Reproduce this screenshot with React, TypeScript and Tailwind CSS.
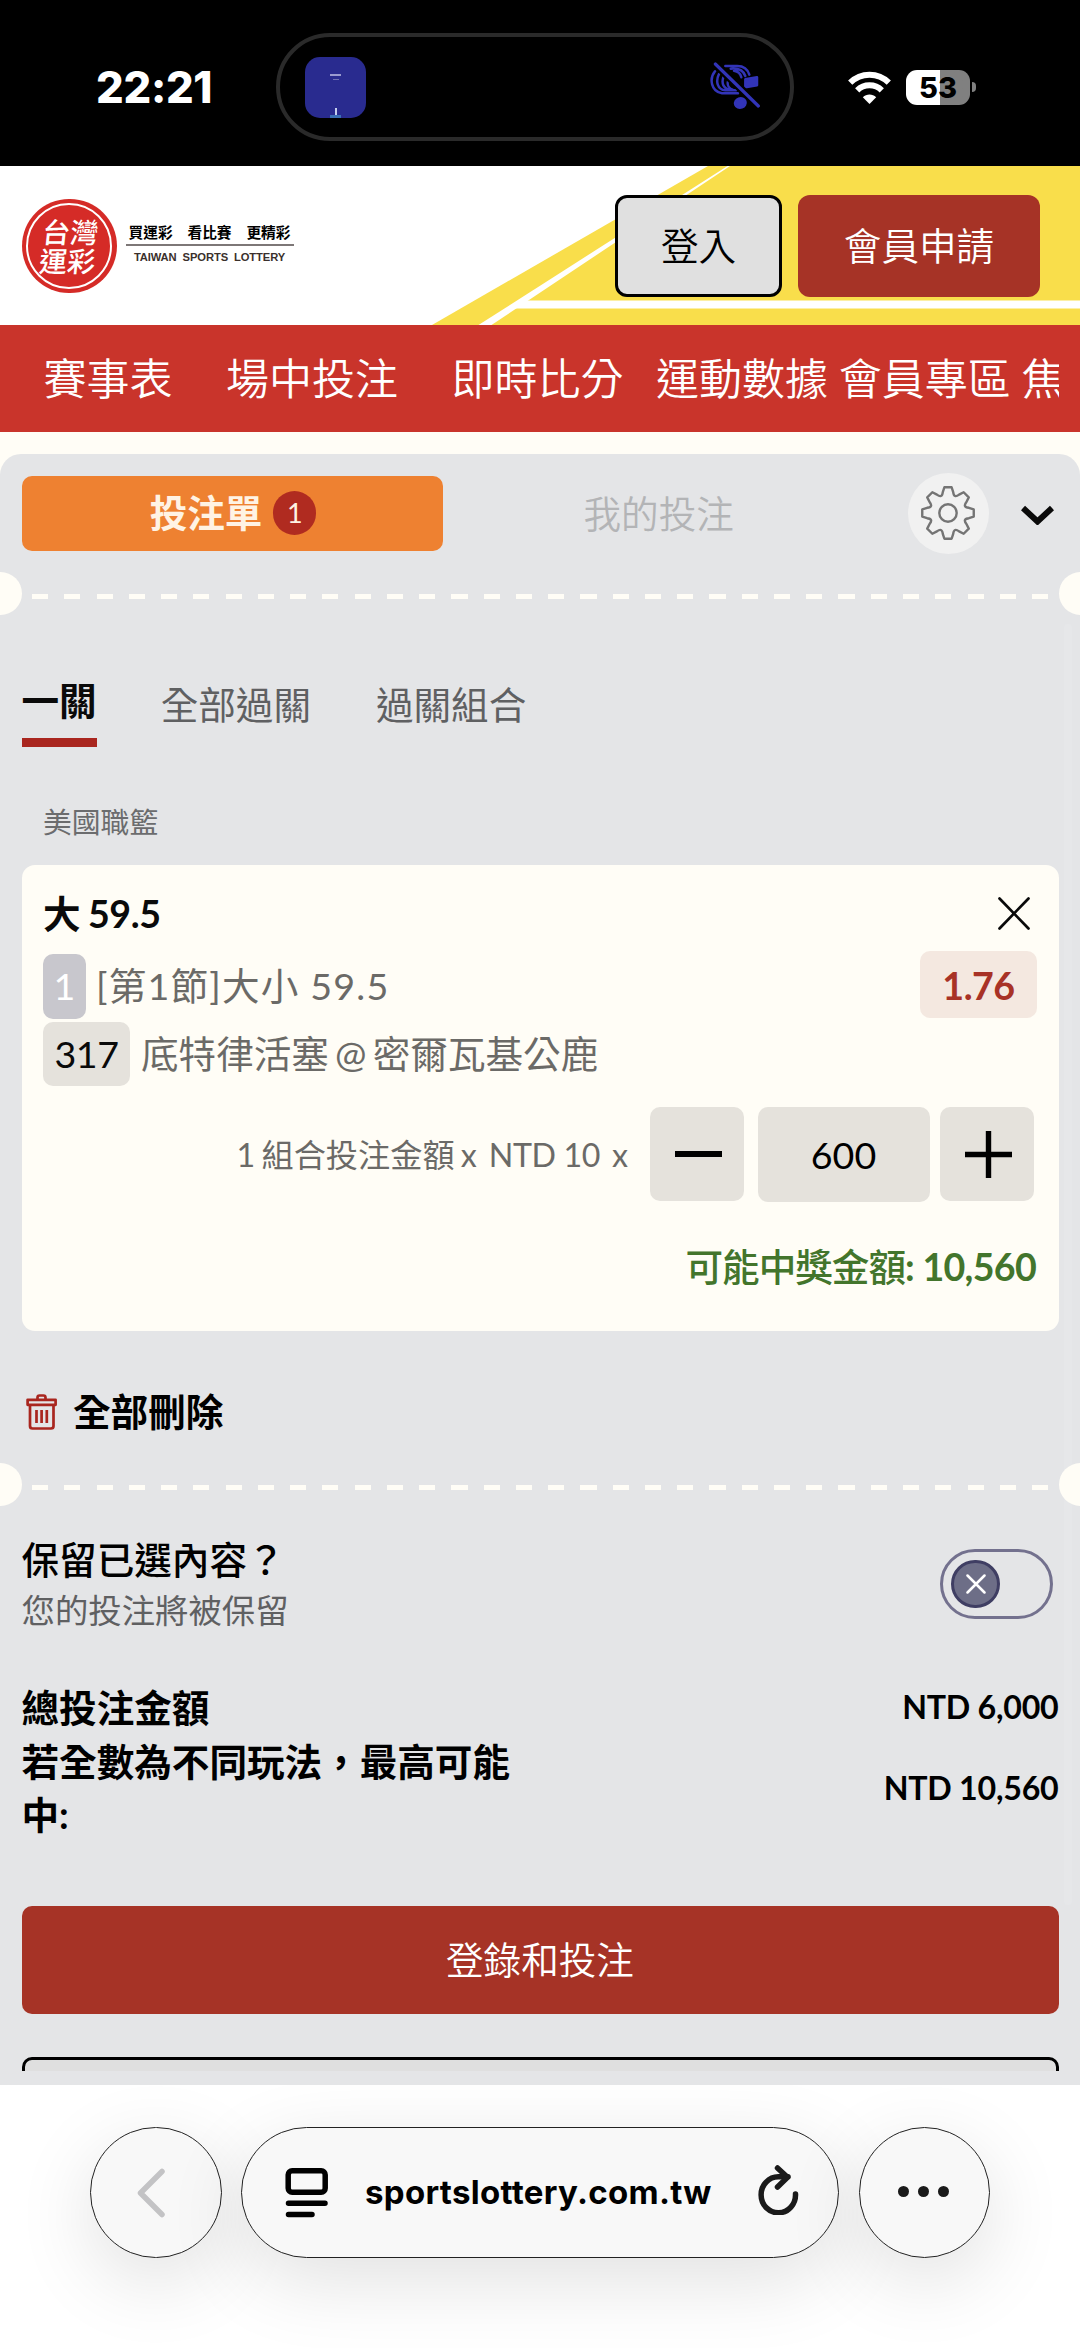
const NAV = [
  { label: '賽事表', gap: 'mr-[53.5px]' },
  { label: '場中投注', gap: 'mr-[53.5px]' },
  { label: '即時比分', gap: 'mr-[32.5px]' },
  { label: '運動數據', gap: 'mr-[10.7px]' },
  { label: '會員專區', gap: 'mr-[10.7px]' },
  { label: '焦', gap: '' },
];

function StatusBar() {
  return (
    <div className="relative flex h-[166px] items-center bg-black text-white">
      <div className="mt-[8px] ml-[96px] w-[120px] font-['Inter'] text-[43.500px] leading-[50px] font-extrabold whitespace-nowrap tracking-[-0.300px]">22:21</div>
      <div className="mt-[8px] ml-[60px] flex h-[108px] w-[518px] items-center justify-between rounded-full border-4 border-[#2a2a2a] pr-[30px] pl-[25px]">
        <div className="flex h-[61px] w-[61px] flex-col items-center rounded-[15px] bg-[#292b8f]">
          <div className="mt-[17px] h-[2px] w-[11px] bg-[#9a9bd0]" />
          <div className="mt-[3px] h-[1px] w-[6px] bg-[#6f70b5]" />
          <div className="mt-[28px] h-[7px] w-[2px] bg-[#c5d0ee]" />
          <div className="h-[3px] w-[11px] bg-[#3a6fb5]" />
        </div>
        <svg width="50" height="50" viewBox="30 38 150 150" fill="none" stroke="#3234b8" strokeWidth="7.500" strokeLinecap="round">
          <path d="M45 66C27 88 33 126 66 132H114M57 74C46 96 52 120 76 123H108M70 84C64 102 70 118 90 121M84 96C81 106 86 117 98 121" />
          <path d="M76 50H112C132 50 143 60 148 76M92 58C116 56 130 62 136 80M102 64C116 66 122 74 124 84" />
          <path d="M136 90L171 84V108L136 114Z" fill="#3234b8" strokeLinejoin="round" />
          <ellipse cx="121" cy="161" rx="16" ry="14" fill="#3234b8" transform="rotate(-20 121 161)" />
          <path d="M46 44L175 170" stroke="#000" strokeWidth="24" />
          <path d="M46 44L175 170" strokeWidth="9.500" />
        </svg>
      </div>
      <svg className="mt-[9px] ml-[54px]" width="43" height="33" viewBox="0 0 43 33" fill="none" stroke="#fff" strokeWidth="6">
        <path d="M2.2 11.6C13 1 30 1 40.800 11.600" />
        <path d="M9.200 19.300C16 12.600 27 12.600 33.800 19.300" />
        <path d="M21.500 33L14.800 26.200C18.600 22.700 24.400 22.700 28.200 26.200Z" fill="#fff" stroke="none" />
      </svg>
      <div className="mt-[8px] ml-[15px] flex items-center">
        <div className="flex h-[35px] w-[64px] items-center justify-center rounded-[11px] bg-linear-to-r from-white from-53% to-[#808080] to-53% font-['Inter'] text-[29px] leading-[35px] font-extrabold text-black">53</div>
        <div className="ml-[2px] h-[10px] w-[4px] rounded-r-full bg-[#808080]" />
      </div>
    </div>
  );
}

function Header() {
  return (
    <div className="relative flex h-[159px] items-center overflow-hidden bg-white">
      <svg className="absolute inset-0" width="1080" height="159" viewBox="0 0 1080 159">
        <path d="M432 159L708 0H727.500L478.500 159Z" fill="#f9de4b" />
        <path d="M491.500 159L730 0H1080V159Z" fill="#f9de4b" />
        <path d="M526 134.500H1080V142.500H513Z" fill="#fff" />
      </svg>
      <div className="relative ml-[21.500px] flex h-[94px] w-[95px] items-center justify-center rounded-full bg-[#d52b27]">
        <div className="flex h-[86px] w-[86px] items-center justify-center rounded-full border-2 border-white">
          <div className="-skew-x-6 pl-[1px] text-center font-['Noto_Sans_CJK_TC'] text-[28px] leading-[28.5px] font-medium text-white">
            台灣
            <br />
            運彩
          </div>
        </div>
      </div>
      <div className="relative mt-[1px] ml-[9px] w-[168px] text-center">
        <div className="flex h-[31px] items-end justify-between border-b-2 border-[#7d7777] px-[3px] pb-[2px] font-['Noto_Sans_CJK_TC'] text-[14.700px] leading-[20px] font-bold text-black">
          <span>買運彩</span>
          <span>看比賽</span>
          <span>更精彩</span>
        </div>
        <div className="mt-[3px] h-[28px] font-['Liberation_Sans'] text-[11.200px] leading-[16px] font-bold tracking-[-0.100px] whitespace-nowrap text-[#3a302c] [word-spacing:3px]">TAIWAN SPORTS LOTTERY</div>
      </div>
      <div className="relative ml-[321.500px] flex gap-[16px] text-[37.6px] leading-[50px] font-[350]">
        <button className="h-[102px] w-[167px] rounded-[12px] border-[3px] border-black bg-[#e0e0e0] text-black">登入</button>
        <button className="h-[102px] w-[242px] rounded-[12px] bg-[#a63326] text-white">會員申請</button>
      </div>
    </div>
  );
}

function Divider() {
  return (
    <div className="relative z-10 flex h-[43px] items-center overflow-hidden">
      <div className="-ml-[21.500px] h-[43px] w-[43px] shrink-0 rounded-full bg-[#fffdf6]" />
      <div className="mx-[10.700px] mt-[5px] h-[5px] flex-1 bg-[repeating-linear-gradient(90deg,#fffdf6_0_16.130px,transparent_16.130px_32.260px)]" />
      <div className="-mr-[21.500px] h-[43px] w-[43px] shrink-0 rounded-full bg-[#fffdf6]" />
    </div>
  );
}

// Outline of an eight-toothed gear centred in a 54px box.
function gearPath() {
  const at = (deg: number, r: number) => {
    const a = (deg * Math.PI) / 180;
    return `${(27 + r * Math.cos(a)).toFixed(2)} ${(27 + r * Math.sin(a)).toFixed(2)}`;
  };
  let d = '';
  for (let i = 0; i < 8; i++) {
    const c = i * 45 - 90;
    d += `${i === 0 ? 'M' : 'L'}${at(c - 8, 26)}L${at(c + 8, 26)}L${at(c + 14, 21.5)}`;
    d += `C${at(c + 19, 17.5)} ${at(c + 26, 17.5)} ${at(c + 31, 21.5)}`;
  }
  return d + 'Z';
}

function SlipTabs() {
  return (
    <div className="flex h-[118px] items-start pt-[21.500px] pl-[21.500px] text-[37.600px]">
      <div className="flex h-[75px] w-[421px] items-center justify-center rounded-[10px] bg-[#ee8131] pl-[2px] font-bold text-[#fff3e4]">
        <span className="leading-[50px]">投注單</span>
        <span className="ml-[11px] flex h-[44px] w-[43px] items-center justify-center rounded-full bg-[#b02b20] text-[27px] leading-[44px] font-normal">1</span>
      </div>
      <div className="ml-[141px] h-[75px] leading-[75px] font-[350] text-[#b3b4b6]">我的投注</div>
      <div className="-mt-[3px] ml-[174px] flex h-[81px] w-[81px] items-center justify-center rounded-full bg-[#f1f1f1]">
        <svg width="54" height="54" viewBox="0 0 54 54" fill="none" stroke="#747474" strokeWidth="2.400" strokeLinejoin="round">
          <path d={gearPath()} />
          <circle cx="27" cy="27" r="8.700" />
        </svg>
      </div>
      <svg className="mt-[29px] ml-[32.500px]" width="33" height="20" viewBox="0 0 33 20" fill="none" stroke="#0a0a0a" strokeWidth="6">
        <path d="M2 3L16.500 16.500L31 3" />
      </svg>
    </div>
  );
}

function Card() {
  return (
    <div className="mx-[21.500px] h-[466px] rounded-[13px] bg-[#fffdf6] px-[21.500px] pt-[27px] text-[37.600px]">
      <div className="flex h-[43px] items-center justify-between">
        <div className="leading-[43px] font-bold tracking-[-0.400px] whitespace-nowrap text-[#0a0a0a] [word-spacing:-1px]">大 59.5</div>
        <svg className="mr-[7px]" width="32" height="33" viewBox="0 0 32 33" stroke="#0a0a0a" strokeWidth="2.700" strokeLinecap="round">
          <path d="M1.500 1.500L30.500 31.500M30.500 1.500L1.500 31.500" />
        </svg>
      </div>
      <div className="mt-[19px] flex h-[65px] items-center text-[#6b6a67]">
        <span className="flex h-[65px] w-[43px] items-center justify-center rounded-[10px] bg-[#c8c7cd] text-white">1</span>
        <span className="ml-[10px] flex-1 tracking-[1.200px] whitespace-nowrap">[第1節]大小 59.5</span>
        <span className="-mt-[4px] flex h-[67px] w-[117px] items-center justify-center rounded-[10px] bg-[#f4e8e0] pt-[3px] font-bold tracking-[-0.500px] text-[#a83226]">1.76</span>
      </div>
      <div className="mt-[3px] flex h-[64px] items-center text-[#6b6a67]">
        <span className="flex h-[64px] w-[87px] items-center justify-center rounded-[10px] bg-[#e5e2dc] tracking-[-0.500px] text-[#0a0a0a]">317</span>
        <span className="ml-[11px] whitespace-nowrap [word-spacing:-3.400px]">底特律活塞 @ 密爾瓦基公鹿</span>
      </div>
      <div className="mt-[21px] flex h-[95px] items-start justify-end pr-[3px] text-black">
        <span className="mr-[22px] text-[32.200px] leading-[95px] whitespace-nowrap text-[#6b6a67] [word-spacing:-2px]">
          1 組合投注金額 x<span className="ml-[4px] tracking-[-0.400px] [word-spacing:0px]"> NTD 10</span>
          <span className="ml-[12px]">x</span>
        </span>
        <button className="mr-[13.500px] flex h-[94px] w-[94px] items-center justify-center rounded-[10px] bg-[#e5e2dc] pl-[3px]">
          <span className="h-[5.400px] w-[47px] bg-black" />
        </button>
        <div className="mr-[10.500px] h-[95px] w-[172px] rounded-[10px] bg-[#e5e2dc] text-center leading-[95px]">600</div>
        <button className="flex h-[94px] w-[94px] items-center justify-center rounded-[10px] bg-[#e5e2dc] pl-[3px]">
          <svg width="47" height="47" viewBox="0 0 47 47" stroke="#000" strokeWidth="5.400">
            <path d="M0 23.500H47M23.500 0V47" />
          </svg>
        </button>
      </div>
      <div className="mt-[43px] pr-[1px] text-right leading-[43px] font-bold tracking-[-0.700px] whitespace-nowrap text-[#43752c]">
        <span className="font-medium tracking-[-1px]">可能中獎金額</span>: 10,560
      </div>
    </div>
  );
}

function Toolbar() {
  return (
    <div className="flex h-[263px] items-start overflow-hidden bg-white pt-[42px] pl-[90px]">
      <div className="flex h-[131px] w-[132px] items-center justify-center rounded-full border-[1.500px] border-[#222] bg-[#f8f8f8] shadow-[0_22px_80px_rgba(0,0,0,0.12)]">
        <svg className="-ml-[10px]" width="30" height="50" viewBox="0 0 30 50" fill="none" stroke="#c3c3c5" strokeWidth="5.500" strokeLinecap="round" strokeLinejoin="round">
          <path d="M26 3.500L4.500 25L26 46.500" />
        </svg>
      </div>
      <div className="ml-[19px] flex h-[131px] w-[598px] items-center rounded-full border-[1.500px] border-[#222] bg-[#f8f8f8] pl-[43px] shadow-[0_22px_80px_rgba(0,0,0,0.12)]">
        <svg width="44" height="50" viewBox="0 0 44 50" fill="none" stroke="#000" strokeWidth="5.500" strokeLinecap="round">
          <rect x="3.200" y="2.800" width="37" height="21.500" rx="4" />
          <path d="M3.500 35.300H40M3.500 46.500H27" />
        </svg>
        <span className="-mt-[2px] ml-[36px] w-[350px] font-['Inter'] text-[33px] leading-[44px] font-bold tracking-[0.300px] whitespace-nowrap text-black">sportslottery.com.tw</span>
        <svg className="-mt-[6px] ml-[43px]" width="41" height="50" viewBox="0 0 41 50" fill="none" stroke="#1a1a1a" strokeWidth="5.500" strokeLinecap="round" strokeLinejoin="round">
          <path d="M37.500 29A17.200 18 0 1 1 20.500 11.800H30" />
          <path d="M19.500 3L29.500 12.200L19.500 22" />
        </svg>
      </div>
      <div className="ml-[20px] flex h-[131px] w-[131px] items-center justify-center gap-[9px] rounded-full border-[1.500px] border-[#222] bg-[#f8f8f8] pr-[2px] pb-[2px] shadow-[0_22px_80px_rgba(0,0,0,0.12)]">
        <span className="h-[11px] w-[11px] rounded-full bg-[#1a1a1a]" />
        <span className="h-[11px] w-[11px] rounded-full bg-[#1a1a1a]" />
        <span className="h-[11px] w-[11px] rounded-full bg-[#1a1a1a]" />
      </div>
    </div>
  );
}

export default function App() {
  return (
    <div className="w-[1080px] overflow-hidden bg-[#fffdf6] font-['Lato','Noto_Sans_CJK_TC',sans-serif]">
      <StatusBar />
      <Header />
      <nav className="h-[107px] bg-[#c9342b] px-[21.500px]">
        <div className="flex overflow-hidden pl-[22px] text-[43px] leading-[107px] font-[350] whitespace-nowrap text-white">
          {NAV.map((n) => (
            <span key={n.label} className={`shrink-0 ${n.gap}`}>
              {n.label}
            </span>
          ))}
        </div>
      </nav>
      <main className="relative mt-[22px] h-[1631px] rounded-t-[21px] bg-[#e4e5e7]">
        <SlipTabs />
        <Divider />
        <div className="mt-[60px] flex h-[72px] items-start pl-[21.500px] text-[37.600px] leading-[53px] text-[#5f6062]">
          <div className="h-[72px] border-b-[9px] border-[#a9261f] font-bold text-[#0a0a0a]">
            <div className="-mt-px">一關</div>
          </div>
          <div className="ml-[64px] pt-[3px]">全部過關</div>
          <div className="ml-[65px] pt-[3px]">過關組合</div>
        </div>
        <div className="mt-[54px] mb-[22px] pl-[43px] text-[28.800px] leading-[42px] text-[#6b6c6e]">美國職籃</div>
        <Card />
        <div className="mt-[59px] mb-[30px] flex h-[43px] items-center pl-[26px] text-[37.600px] leading-[43px] font-bold">
          <svg width="32" height="36" viewBox="0 0 32 36" fill="none" stroke="#a9261f" strokeWidth="2.700" strokeLinejoin="round">
            <path d="M11.500 5.500V3.500Q11.500 1.500 13.500 1.500H17.500Q19.500 1.500 19.500 3.500V5.500" />
            <rect x="1.600" y="5.800" width="28" height="5" />
            <path d="M4 11V32Q4 34.500 6.500 34.500H25Q27.500 34.500 27.500 32V11M10.500 16V29M15.600 16V29M20.800 16V29" />
          </svg>
          <span className="ml-[15px]">全部刪除</span>
        </div>
        <Divider />
        <div className="mt-[27px] flex items-center justify-between pr-[27px] pl-[21.500px]">
          <div>
            <div className="text-[37.600px] leading-[53px] font-medium">保留已選內容？</div>
            <div className="text-[33.400px] leading-[48px] text-[#5f6062]">您的投注將被保留</div>
          </div>
          <div className="flex h-[70px] w-[113px] items-center rounded-full border-[3px] border-[#73718e] pl-[8px]">
            <div className="flex h-[48px] w-[49px] items-center justify-center rounded-full border-[3px] border-[#3f3e63] bg-[#6d6e87]">
              <svg width="20" height="20" viewBox="0 0 20 20" stroke="#fff" strokeWidth="2.500" strokeLinecap="round">
                <path d="M1.500 1.500L18.500 18.500M18.500 1.500L1.500 18.500" />
              </svg>
            </div>
          </div>
        </div>
        <div className="mx-[21.500px] mt-[47px] font-bold">
          <div className="flex justify-between leading-[53.700px]">
            <span className="text-[37.600px]">總投注金額</span>
            <span className="text-[32.200px] leading-[51px] tracking-[-0.250px]">NTD 6,000</span>
          </div>
          <div className="flex items-center justify-between leading-[53.700px]">
            <span className="w-[500px] text-[37.600px]">若全數為不同玩法，最高可能中:</span>
            <span className="pb-[2px] text-[32.200px] tracking-[-0.250px]">NTD 10,560</span>
          </div>
        </div>
        <button className="mx-[21.500px] mt-[64px] block h-[108px] w-[1037px] rounded-[10px] bg-[#a63326] text-[37.600px] font-[350] text-white">登錄和投注</button>
        <div className="mx-[21.500px] mt-[43px] h-[14px] overflow-hidden">
          <div className="h-[108px] rounded-[10px] border-[3px] border-black bg-[#dfdfdf]" />
        </div>
        <div className="absolute top-[170px] right-[8px] h-[1281px] w-[8px] rounded-full bg-[#e6e7e9]" />
      </main>
      <Toolbar />
    </div>
  );
}
